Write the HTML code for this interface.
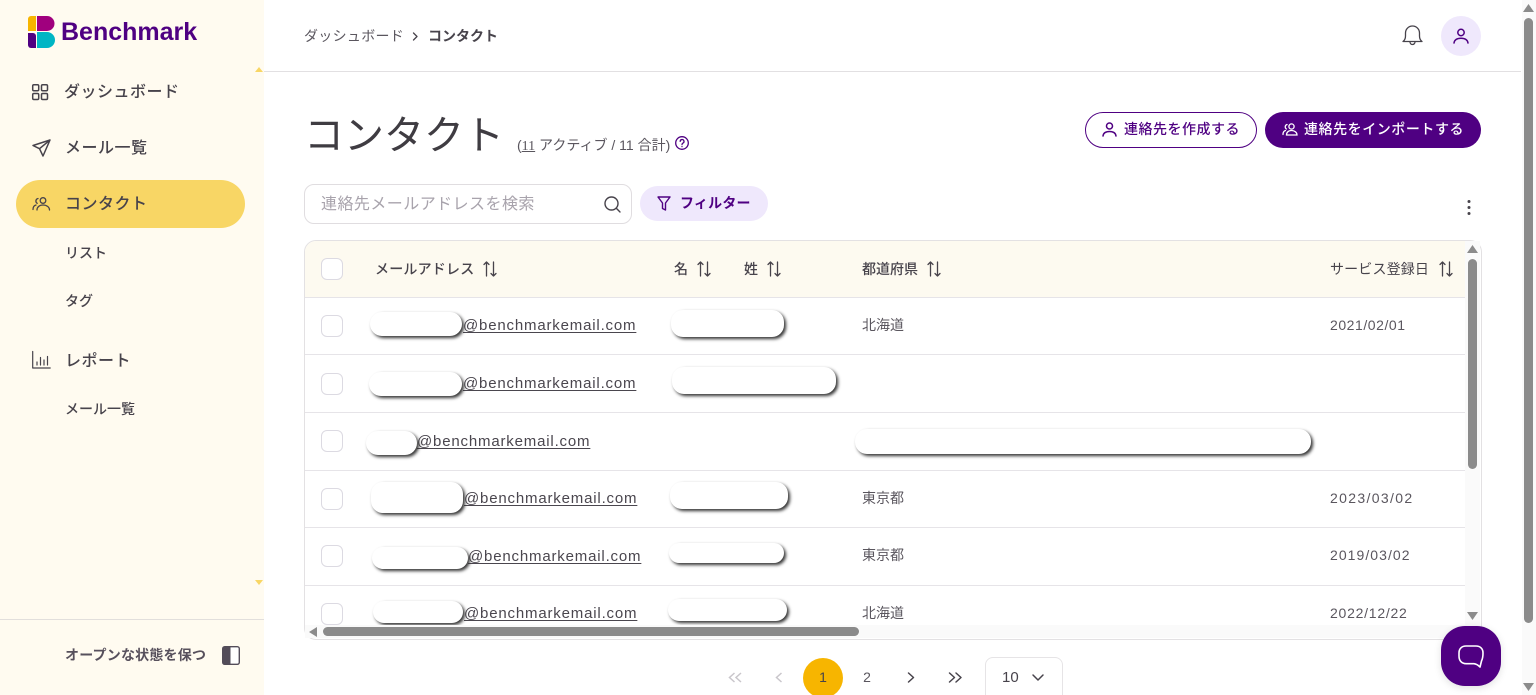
<!DOCTYPE html>
<html lang="ja"><head><meta charset="utf-8"><title>コンタクト</title>
<style>
html,body{margin:0;padding:0;width:1536px;height:695px;overflow:hidden;background:#fff}
body{position:relative;font-family:"Liberation Sans","Noto Sans CJK JP",sans-serif;color:#47434b}
.a{position:absolute}
.t{position:absolute;white-space:nowrap;line-height:20px;height:20px}
.nav{font-size:16px;font-weight:500;letter-spacing:.5px;color:#47434b}
.sub{font-size:14px;font-weight:500;color:#47434b}
.th{font-size:14px;font-weight:500;color:#47434b;top:259px}
.td{font-size:14px;color:#5a565e}
.dt{font-size:14px;color:#5a565e}
.em{font-size:15px;letter-spacing:.82px;color:#4a464e;text-decoration:underline;text-underline-offset:2px;text-decoration-thickness:1px}
.b{position:absolute;background:#fff;box-shadow:2px 2px 3px #333;border-radius:12px}
.cb{position:absolute;left:321px;width:20px;height:20px;border:1px solid #dcdae2;border-radius:6px;background:#fff}
.ln{position:absolute;left:305px;width:1160px;height:1px;background:#e6e4e8}
svg{position:absolute;overflow:visible}
.s{fill:none;stroke:#47434b;stroke-width:1.5;stroke-linecap:round;stroke-linejoin:round}
.p{fill:none;stroke:#4f0082;stroke-width:1.5;stroke-linecap:round;stroke-linejoin:round}
</style></head><body>

<!-- sidebar -->
<div class="a" style="left:0;top:0;width:264px;height:695px;background:#fffbf0"></div>
<div class="a" style="left:0;top:619px;width:264px;height:1px;background:#e2dfdc"></div>
<svg style="left:28px;top:16px" width="27" height="32" viewBox="0 0 27 32">
<path d="M0 3a3 3 0 0 1 3-3h5v15H0z" fill="#f7b500"/>
<path d="M9 0h10a7.5 7.5 0 0 1 0 15H9z" fill="#a0007e"/>
<path d="M0 17h5a3 3 0 0 1 3 3v12H3a3 3 0 0 1-3-3z" fill="#4f0082"/>
<path d="M9 16h10a8 8 0 0 1 0 16H9z" fill="#00b5c4"/>
</svg>
<div class="t" style="left:61px;top:17px;height:30px;line-height:30px;font-size:25px;font-weight:700;color:#4f0082">Benchmark</div>
<svg style="left:255px;top:67px" width="8" height="5"><path d="M4 0l4 5H0z" fill="#f8d665"/></svg>
<svg style="left:255px;top:580px" width="8" height="5"><path d="M0 0h8L4 5z" fill="#f8d665"/></svg>

<svg class="s" style="left:32px;top:84px" width="16" height="16" viewBox="0 0 16 16"><rect x=".7" y=".7" width="6" height="6" rx="1.2"/><rect x="9.5" y=".7" width="6" height="6" rx="1.2"/><rect x=".7" y="9.5" width="6" height="6" rx="1.2"/><rect x="9.5" y="9.5" width="6" height="6" rx="1.2"/></svg>
<div class="t nav" style="left:64px;top:83px">ダッシュボード</div>
<svg class="s" style="left:32px;top:139px" width="19" height="18" viewBox="0 0 19 18"><path d="M18 1L1 6.5l6.5 3.2L11 17zM18 1L7.5 9.700"/></svg>
<div class="t nav" style="left:65px;top:139px">メール一覧</div>

<div class="a" style="left:16px;top:180px;width:229px;height:48px;border-radius:24px;background:#f8d665"></div>
<svg class="s" style="left:32px;top:197px;stroke-width:1.3" width="19" height="14" viewBox="0 0 19 14"><circle cx="11" cy="3.500" r="2.800"/><path d="M5 13c0-3 2.500-5 6-5s6.500 2 6.500 5M6 1.500a2.600 2.600 0 0 0-.8 4.800M1 12.500c0-2.500 1-4 3-4.500"/></svg>
<div class="t nav" style="left:65px;top:195px">コンタクト</div>
<div class="t sub" style="left:65px;top:243px">リスト</div>
<div class="t sub" style="left:65px;top:291px">タグ</div>
<svg class="s" style="left:32px;top:351px;stroke-width:1.2" width="19" height="18" viewBox="0 0 19 18"><path d="M.7.500v16.500h17.500M5 14v-3M8.500 14V6.500M12 14V9M15.500 14V5.500"/></svg>
<div class="t nav" style="left:65px;top:352px">レポート</div>
<div class="t sub" style="left:65px;top:399px">メール一覧</div>
<div class="t" style="left:65px;top:645px;font-size:14px;font-weight:700;letter-spacing:.2px;color:#57505c">オープンな状態を保つ</div>
<svg style="left:222px;top:646px" width="18" height="19" viewBox="0 0 18 19"><rect x=".7" y=".7" width="16.600" height="17.600" rx="2" fill="#fff" stroke="#534c59" stroke-width="1.4"/><path d="M2 .7h6.500v17.600H2a1.300 1.300 0 0 1-1.300-1.300V2A1.300 1.300 0 0 1 2 .7z" fill="#534c59"/></svg>

<!-- top bar -->
<div class="a" style="left:264px;top:71px;width:1257px;height:1px;background:#e2e0e2"></div>
<div class="t" style="left:304px;top:26px;font-size:14px;letter-spacing:.3px;color:#5a565e">ダッシュボード</div>
<svg class="s" style="left:412px;top:32px;stroke-width:1.3" width="7" height="9" viewBox="0 0 7 9"><path d="M1.500 1L5 4.500 1.500 8"/></svg>
<div class="t" style="left:428px;top:26px;font-size:14px;font-weight:700;color:#47434b">コンタクト</div>
<svg class="s" style="left:1402px;top:25px;stroke-width:1.3" width="21" height="21" viewBox="0 0 21 21"><path d="M1 16.500c2-1.500 2.500-3 2.500-5.500V8a7 7 0 0 1 14 0v3c0 2.500.5 4 2.500 5.500zM8 17a2.500 2.500 0 0 0 5 0"/></svg>
<div class="a" style="left:1441px;top:16px;width:40px;height:40px;border-radius:50%;background:#efe8fc"></div>
<svg class="p" style="left:1453px;top:28px" width="16" height="16" viewBox="0 0 16 16"><circle cx="8" cy="4.500" r="3.200"/><path d="M1 15c.5-3 3-4.700 7-4.700s6.500 1.700 7 4.700"/></svg>

<!-- title -->
<div class="t" style="left:304px;top:110px;height:52px;line-height:52px;font-size:40px;font-weight:400;color:#3f3c42">コンタクト</div>
<div class="t" style="left:517px;top:135px;font-size:14px;color:#5a565e">(<span style="text-decoration:underline;font-family:'Liberation Serif',serif">11</span> アクティブ / 11 合計)</div>
<svg class="p" style="left:675px;top:136px;stroke-width:1.300" width="14" height="14" viewBox="0 0 14 14"><circle cx="7" cy="7" r="6.300"/><path d="M5.200 5.400a1.900 1.900 0 1 1 2.800 1.700c-.7.400-1 .8-1 1.500M7 10.500v.1"/></svg>

<div class="a" style="left:1085px;top:112px;width:170px;height:34px;border:1px solid #4f0082;border-radius:18px;background:#fff"></div>
<svg class="p" style="left:1102px;top:122px" width="15" height="15" viewBox="0 0 15 15"><circle cx="7.500" cy="4" r="3"/><path d="M1 14c.4-3 2.800-4.500 6.500-4.500S13.600 11 14 14"/></svg>
<div class="t" style="left:1124px;top:119px;font-size:14px;font-weight:500;letter-spacing:.5px;color:#4f0082">連絡先を作成する</div>
<div class="a" style="left:1265px;top:112px;width:216px;height:36px;border-radius:18px;background:#4f0082"></div>
<svg style="left:1282px;top:123px;fill:none;stroke:#fff;stroke-width:1.300;stroke-linecap:round" width="16" height="13" viewBox="0 0 16 13"><circle cx="9.500" cy="3.500" r="2.600"/><path d="M4.500 12c0-2.700 2-4.500 5-4.500s5.500 1.800 5.500 4.500zM5 1.500a2.500 2.500 0 0 0-.6 4.500M1 11.500c0-2 .8-3.500 2.500-4"/></svg>
<div class="t" style="left:1304px;top:119px;font-size:14px;font-weight:500;letter-spacing:.55px;color:#fff">連絡先をインポートする</div>

<!-- search -->
<div class="a" style="left:304px;top:184px;width:326px;height:38px;border:1px solid #e0dde0;border-radius:10px;background:#fff"></div>
<div class="t" style="left:321px;top:195px;font-size:16px;letter-spacing:.45px;color:#a8a3ac">連絡先メールアドレスを検索</div>
<svg class="s" style="left:604px;top:196px;stroke-width:1.400" width="17" height="17" viewBox="0 0 17 17"><circle cx="7.500" cy="7.500" r="6.500"/><path d="M12.300 12.300L16 16"/></svg>
<div class="a" style="left:640px;top:186px;width:128px;height:35px;border-radius:18px;background:#efe8fc"></div>
<svg class="p" style="left:657px;top:196px;stroke-width:1.400" width="14" height="15" viewBox="0 0 14 15"><path d="M1 1h12L8.500 7v7l-3-1.500V7z"/></svg>
<div class="t" style="left:680px;top:193px;font-size:14px;font-weight:700;letter-spacing:.2px;color:#4f0082">フィルター</div>
<svg style="left:1466px;top:199px" width="6" height="17"><circle cx="3" cy="2.500" r="1.500" fill="#47434b"/><circle cx="3" cy="8.500" r="1.500" fill="#47434b"/><circle cx="3" cy="14.500" r="1.500" fill="#47434b"/></svg>

<!-- table -->
<div class="a" style="left:304px;top:240px;width:1176px;height:398px;border:1px solid #e3e1e3;border-radius:12px;background:#fff"></div>
<div class="a" style="left:305px;top:241px;width:1160px;height:56px;border-radius:11px 0 0 0;background:#fdfaf0"></div>
<div class="ln" style="top:297px"></div>
<div class="ln" style="top:354px"></div>
<div class="ln" style="top:412px"></div>
<div class="ln" style="top:470px"></div>
<div class="ln" style="top:527px"></div>
<div class="ln" style="top:585px"></div>

<div class="cb" style="top:258px"></div>
<div class="cb" style="top:315px"></div>
<div class="cb" style="top:373px"></div>
<div class="cb" style="top:430px"></div>
<div class="cb" style="top:488px"></div>
<div class="cb" style="top:545px"></div>
<div class="cb" style="top:603px"></div>

<div class="t th" style="left:375px;letter-spacing:.2px">メールアドレス</div>
<div class="t th" style="left:674px">名</div>
<div class="t th" style="left:744px">姓</div>
<div class="t th" style="left:862px">都道府県</div>
<div class="t th" style="left:1330px;font-weight:400;letter-spacing:.15px">サービス登録日</div>
<svg class="s" style="left:483px;top:261px;stroke-width:1.300" width="14" height="15" viewBox="0 0 14 15"><path d="M3.500 15V1M1 3.500L3.500 1 6 3.500M10.500 1v14M8 12.500l2.500 2.500 2.500-2.500"/></svg>
<svg class="s" style="left:697px;top:261px;stroke-width:1.300" width="14" height="15" viewBox="0 0 14 15"><path d="M3.500 15V1M1 3.500L3.500 1 6 3.500M10.500 1v14M8 12.500l2.500 2.500 2.500-2.500"/></svg>
<svg class="s" style="left:767px;top:261px;stroke-width:1.300" width="14" height="15" viewBox="0 0 14 15"><path d="M3.500 15V1M1 3.500L3.500 1 6 3.500M10.500 1v14M8 12.500l2.500 2.500 2.500-2.500"/></svg>
<svg class="s" style="left:927px;top:261px;stroke-width:1.300" width="14" height="15" viewBox="0 0 14 15"><path d="M3.500 15V1M1 3.500L3.500 1 6 3.500M10.500 1v14M8 12.500l2.500 2.500 2.500-2.500"/></svg>
<svg class="s" style="left:1439px;top:261px;stroke-width:1.300" width="14" height="15" viewBox="0 0 14 15"><path d="M3.500 15V1M1 3.500L3.500 1 6 3.500M10.500 1v14M8 12.500l2.500 2.500 2.500-2.500"/></svg>

<div class="t em" style="left:463px;top:316px">@benchmarkemail.com</div>
<div class="t em" style="left:463px;top:374px">@benchmarkemail.com</div>
<div class="t em" style="left:417px;top:432px">@benchmarkemail.com</div>
<div class="t em" style="left:464px;top:489px">@benchmarkemail.com</div>
<div class="t em" style="left:468px;top:547px">@benchmarkemail.com</div>
<div class="t em" style="left:464px;top:604px">@benchmarkemail.com</div>

<div class="b" style="left:370px;top:312px;width:92px;height:24px"></div>
<div class="b" style="left:671px;top:310px;width:113px;height:27px"></div>
<div class="b" style="left:369px;top:372px;width:93px;height:24px"></div>
<div class="b" style="left:672px;top:367px;width:164px;height:27px"></div>
<div class="b" style="left:366px;top:431px;width:51px;height:24px"></div>
<div class="b" style="left:855px;top:429px;width:456px;height:25px"></div>
<div class="b" style="left:371px;top:482px;width:92px;height:31px"></div>
<div class="b" style="left:670px;top:482px;width:118px;height:27px"></div>
<div class="b" style="left:372px;top:547px;width:96px;height:22px"></div>
<div class="b" style="left:669px;top:543px;width:115px;height:20px"></div>
<div class="b" style="left:373px;top:601px;width:90px;height:22px"></div>
<div class="b" style="left:668px;top:599px;width:119px;height:22px"></div>

<div class="t td" style="left:862px;top:315px">北海道</div>
<div class="t td" style="left:862px;top:488px">東京都</div>
<div class="t td" style="left:862px;top:545px">東京都</div>
<div class="t td" style="left:862px;top:603px">北海道</div>
<div class="t dt" style="left:1330px;top:315px;letter-spacing:.55px">2021/02/01</div>
<div class="t dt" style="left:1330px;top:488px;letter-spacing:1.35px">2023/03/02</div>
<div class="t dt" style="left:1330px;top:545px;letter-spacing:1.05px">2019/03/02</div>
<div class="t dt" style="left:1330px;top:603px;letter-spacing:.75px">2022/12/22</div>

<!-- table scrollbars -->
<div class="a" style="left:305px;top:625px;width:1160px;height:13px;background:#fafafa"></div>
<svg style="left:309px;top:627px" width="8" height="10"><path d="M0 5l8-5v10z" fill="#8b8b8b"/></svg>
<div class="a" style="left:323px;top:627px;width:536px;height:9px;border-radius:5px;background:#8b8b8b"></div>
<div class="a" style="left:1465px;top:241px;width:15px;height:397px;background:#fafafa"></div>
<svg style="left:1467px;top:245px" width="11" height="8"><path d="M5.500 0l5.500 8H0z" fill="#8b8b8b"/></svg>
<div class="a" style="left:1468px;top:259px;width:9px;height:210px;border-radius:5px;background:#8b8b8b"></div>
<svg style="left:1467px;top:612px" width="11" height="8"><path d="M0 0h11L5.500 8z" fill="#8b8b8b"/></svg>

<!-- pagination -->
<svg style="left:728px;top:672px;fill:none;stroke:#c9c6cb;stroke-width:1.500" width="15" height="11" viewBox="0 0 15 11"><path d="M6.500 1L1.500 5.500l5 4.500M13 1L8 5.500l5 4.500"/></svg>
<svg style="left:775px;top:672px;fill:none;stroke:#c9c6cb;stroke-width:1.500" width="8" height="11" viewBox="0 0 8 11"><path d="M6.500 1L1.500 5.500l5 4.500"/></svg>
<div class="a" style="left:803px;top:658px;width:40px;height:40px;border-radius:50%;background:#f7b500"></div>
<div class="t" style="left:803px;width:40px;text-align:center;top:667px;font-size:14px;color:#47434b">1</div>
<div class="t" style="left:847px;width:40px;text-align:center;top:667px;font-size:14px;color:#5a565e">2</div>
<svg class="s" style="left:907px;top:672px" width="8" height="11" viewBox="0 0 8 11"><path d="M1.500 1l5 4.500-5 4.500"/></svg>
<svg class="s" style="left:948px;top:672px" width="15" height="11" viewBox="0 0 15 11"><path d="M1.500 1l5 4.500-5 4.500M8 1l5 4.500-5 4.500"/></svg>
<div class="a" style="left:985px;top:657px;width:76px;height:50px;border:1px solid #e6e4e6;border-radius:8px;background:#fff"></div>
<div class="t" style="left:1002px;top:668px;font-size:15px;color:#47434b">10</div>
<svg class="s" style="left:1032px;top:674px" width="12" height="7" viewBox="0 0 12 7"><path d="M1 1l5 5 5-5"/></svg>

<!-- page scrollbar -->
<div class="a" style="left:1522px;top:0;width:14px;height:695px;background:#fafafa"></div>
<svg style="left:1523px;top:4px" width="11" height="8"><path d="M5.500 0l5.500 8H0z" fill="#8b8b8b"/></svg>
<div class="a" style="left:1524px;top:18px;width:9px;height:605px;border-radius:5px;background:#8b8b8b"></div>
<svg style="left:1523px;top:683px" width="11" height="8"><path d="M0 0h11L5.500 8z" fill="#8b8b8b"/></svg>

<!-- chat -->
<div class="a" style="left:1441px;top:626px;width:60px;height:60px;border-radius:24px;background:#4f0082;box-shadow:0 2px 8px rgba(0,0,0,.12)"></div>
<svg style="left:1458px;top:645px;fill:none;stroke:#fff;stroke-width:1.600;stroke-linejoin:round" width="26" height="24" viewBox="0 0 26 24"><path d="M8 1h10c4 0 7 2.500 7 7 0 3-.500 6-1.500 8-.5 2-1 4-1.500 6-1.500-1.500-3.500-3-6-3.300H8c-4 0-7-2.700-7-7.700V8c0-4.500 3-7 7-7z"/></svg>

</body></html>
